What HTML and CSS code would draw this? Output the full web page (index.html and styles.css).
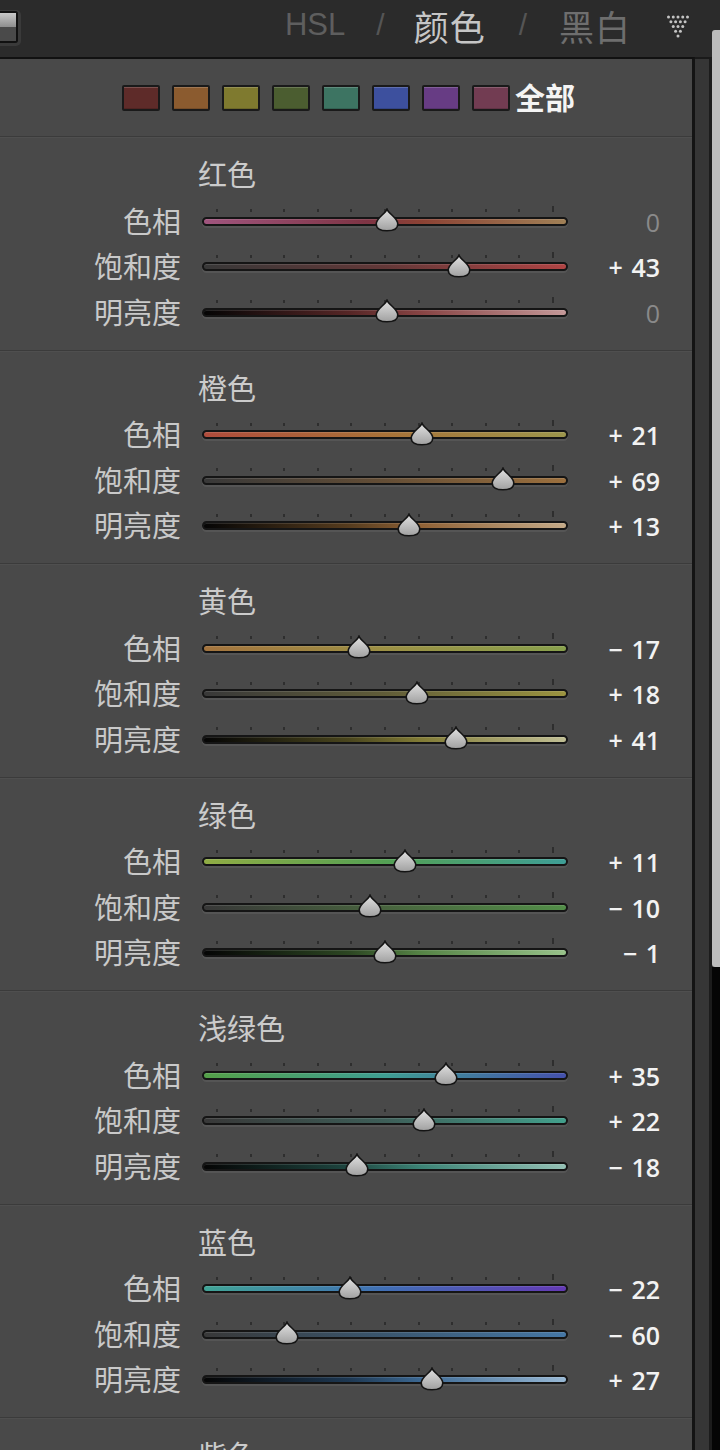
FILE: index.html
```html
<!DOCTYPE html>
<html lang="zh">
<head>
<meta charset="utf-8">
<title>HSL / 颜色 / 黑白</title>
<link rel="stylesheet" href="styles.css">
</head>
<body>
<div class="app">
  <div class="main">
    <header class="header">
      <div class="toggle"><span class="toggle-top"></span><span class="toggle-bottom"></span></div>
      <nav class="nav">
        <span class="tab tab-hsl">HSL</span>
        <span class="sep sep-1">/</span>
        <span class="tab tab-active">颜色</span>
        <span class="sep sep-2">/</span>
        <span class="tab tab-bw">黑白</span>
        <svg class="menu-icon" width="24" height="24" viewBox="0 0 24 24">
          <g fill="#c4c4c4">
            <circle cx="2.5" cy="3" r="1.5"/><circle cx="7.25" cy="3" r="1.5"/><circle cx="12" cy="3" r="1.5"/><circle cx="16.75" cy="3" r="1.5"/><circle cx="21.5" cy="3" r="1.5"/>
            <circle cx="4.9" cy="7.75" r="1.5"/><circle cx="9.6" cy="7.75" r="1.5"/><circle cx="14.4" cy="7.75" r="1.5"/><circle cx="19.1" cy="7.75" r="1.5"/>
            <circle cx="7.25" cy="12.5" r="1.5"/><circle cx="12" cy="12.5" r="1.5"/><circle cx="16.75" cy="12.5" r="1.5"/>
            <circle cx="9.6" cy="17.25" r="1.5"/><circle cx="14.4" cy="17.25" r="1.5"/>
            <circle cx="12" cy="22" r="1.5"/>
          </g>
        </svg>
      </nav>
    </header>
    <div class="body">
      <div class="panel">
        <div class="swatches">
          <span class="swatch sw-red"></span>
          <span class="swatch sw-orange"></span>
          <span class="swatch sw-yellow"></span>
          <span class="swatch sw-green"></span>
          <span class="swatch sw-aqua"></span>
          <span class="swatch sw-blue"></span>
          <span class="swatch sw-purple"></span>
          <span class="swatch sw-magenta"></span>
          <span class="all">全部</span>
        </div>

        <section class="group">
          <div class="title">红色</div>
          <div class="row"><span class="label">色相</span><div class="slider"><div class="ticks"><i></i><i></i><i></i><i></i><i></i><i></i><i></i><i></i><i></i><i></i><i></i></div><div class="track tr-red-h"></div><div class="thumb" style="--v:0"></div></div><span class="value zero">0</span></div>
          <div class="row"><span class="label">饱和度</span><div class="slider"><div class="ticks"><i></i><i></i><i></i><i></i><i></i><i></i><i></i><i></i><i></i><i></i><i></i></div><div class="track tr-red-s"></div><div class="thumb" style="--v:43"></div></div><span class="value">+ 43</span></div>
          <div class="row"><span class="label">明亮度</span><div class="slider"><div class="ticks"><i></i><i></i><i></i><i></i><i></i><i></i><i></i><i></i><i></i><i></i><i></i></div><div class="track tr-red-l"></div><div class="thumb" style="--v:0"></div></div><span class="value zero">0</span></div>
        </section>

        <section class="group">
          <div class="title">橙色</div>
          <div class="row"><span class="label">色相</span><div class="slider"><div class="ticks"><i></i><i></i><i></i><i></i><i></i><i></i><i></i><i></i><i></i><i></i><i></i></div><div class="track tr-orange-h"></div><div class="thumb" style="--v:21"></div></div><span class="value">+ 21</span></div>
          <div class="row"><span class="label">饱和度</span><div class="slider"><div class="ticks"><i></i><i></i><i></i><i></i><i></i><i></i><i></i><i></i><i></i><i></i><i></i></div><div class="track tr-orange-s"></div><div class="thumb" style="--v:69"></div></div><span class="value">+ 69</span></div>
          <div class="row"><span class="label">明亮度</span><div class="slider"><div class="ticks"><i></i><i></i><i></i><i></i><i></i><i></i><i></i><i></i><i></i><i></i><i></i></div><div class="track tr-orange-l"></div><div class="thumb" style="--v:13"></div></div><span class="value">+ 13</span></div>
        </section>

        <section class="group">
          <div class="title">黄色</div>
          <div class="row"><span class="label">色相</span><div class="slider"><div class="ticks"><i></i><i></i><i></i><i></i><i></i><i></i><i></i><i></i><i></i><i></i><i></i></div><div class="track tr-yellow-h"></div><div class="thumb" style="--v:-17"></div></div><span class="value">− 17</span></div>
          <div class="row"><span class="label">饱和度</span><div class="slider"><div class="ticks"><i></i><i></i><i></i><i></i><i></i><i></i><i></i><i></i><i></i><i></i><i></i></div><div class="track tr-yellow-s"></div><div class="thumb" style="--v:18"></div></div><span class="value">+ 18</span></div>
          <div class="row"><span class="label">明亮度</span><div class="slider"><div class="ticks"><i></i><i></i><i></i><i></i><i></i><i></i><i></i><i></i><i></i><i></i><i></i></div><div class="track tr-yellow-l"></div><div class="thumb" style="--v:41"></div></div><span class="value">+ 41</span></div>
        </section>

        <section class="group">
          <div class="title">绿色</div>
          <div class="row"><span class="label">色相</span><div class="slider"><div class="ticks"><i></i><i></i><i></i><i></i><i></i><i></i><i></i><i></i><i></i><i></i><i></i></div><div class="track tr-green-h"></div><div class="thumb" style="--v:11"></div></div><span class="value">+ 11</span></div>
          <div class="row"><span class="label">饱和度</span><div class="slider"><div class="ticks"><i></i><i></i><i></i><i></i><i></i><i></i><i></i><i></i><i></i><i></i><i></i></div><div class="track tr-green-s"></div><div class="thumb" style="--v:-10"></div></div><span class="value">− 10</span></div>
          <div class="row"><span class="label">明亮度</span><div class="slider"><div class="ticks"><i></i><i></i><i></i><i></i><i></i><i></i><i></i><i></i><i></i><i></i><i></i></div><div class="track tr-green-l"></div><div class="thumb" style="--v:-1"></div></div><span class="value">− 1</span></div>
        </section>

        <section class="group">
          <div class="title">浅绿色</div>
          <div class="row"><span class="label">色相</span><div class="slider"><div class="ticks"><i></i><i></i><i></i><i></i><i></i><i></i><i></i><i></i><i></i><i></i><i></i></div><div class="track tr-aqua-h"></div><div class="thumb" style="--v:35"></div></div><span class="value">+ 35</span></div>
          <div class="row"><span class="label">饱和度</span><div class="slider"><div class="ticks"><i></i><i></i><i></i><i></i><i></i><i></i><i></i><i></i><i></i><i></i><i></i></div><div class="track tr-aqua-s"></div><div class="thumb" style="--v:22"></div></div><span class="value">+ 22</span></div>
          <div class="row"><span class="label">明亮度</span><div class="slider"><div class="ticks"><i></i><i></i><i></i><i></i><i></i><i></i><i></i><i></i><i></i><i></i><i></i></div><div class="track tr-aqua-l"></div><div class="thumb" style="--v:-18"></div></div><span class="value">− 18</span></div>
        </section>

        <section class="group">
          <div class="title">蓝色</div>
          <div class="row"><span class="label">色相</span><div class="slider"><div class="ticks"><i></i><i></i><i></i><i></i><i></i><i></i><i></i><i></i><i></i><i></i><i></i></div><div class="track tr-blue-h"></div><div class="thumb" style="--v:-22"></div></div><span class="value">− 22</span></div>
          <div class="row"><span class="label">饱和度</span><div class="slider"><div class="ticks"><i></i><i></i><i></i><i></i><i></i><i></i><i></i><i></i><i></i><i></i><i></i></div><div class="track tr-blue-s"></div><div class="thumb" style="--v:-60"></div></div><span class="value">− 60</span></div>
          <div class="row"><span class="label">明亮度</span><div class="slider"><div class="ticks"><i></i><i></i><i></i><i></i><i></i><i></i><i></i><i></i><i></i><i></i><i></i></div><div class="track tr-blue-l"></div><div class="thumb" style="--v:27"></div></div><span class="value">+ 27</span></div>
        </section>

        <section class="group">
          <div class="title">紫色</div>
        </section>
      </div>
      <div class="gutter"></div>
    </div>
  </div>
  <div class="scrollcol">
    <div class="scroll-top"></div>
    <div class="scroll-thumb"></div>
    <div class="scroll-rest"></div>
  </div>
</div>
</body>
</html>
```

FILE: styles.css
```css
html, body {
  margin: 0;
  padding: 0;
}
body {
  width: 720px;
  height: 1450px;
  overflow: hidden;
  background: #2b2b2b;
  font-family: "Noto Sans CJK SC", "Noto Sans", sans-serif;
  color: #c8c8c8;
}
.app {
  display: flex;
  height: 1450px;
}
.main {
  width: 712px;
  display: flex;
  flex-direction: column;
}
.header {
  height: 57px;
  flex: none;
  background: #2b2b2b;
  display: flex;
  align-items: center;
}
.toggle {
  width: 16px;
  height: 28px;
  margin-top: -4px;
  border: 2px solid #111;
  border-left-width: 0;
  border-radius: 0 3px 3px 0;
  display: flex;
  flex-direction: column;
  box-shadow: 1px 1px 0 2px #3a3a3a;
}
.toggle-top {
  flex: 1;
  background: linear-gradient(#c8c8c8, #8e8e8e);
}
.toggle-bottom {
  flex: 1;
  background: #4a4a4a;
}
.nav {
  margin-left: auto;
  margin-right: 22px;
  margin-top: -5px;
  display: flex;
  align-items: center;
}
.tab {
  font-size: 35px;
  line-height: 40px;
  letter-spacing: 1px;
}
.tab-hsl {
  font-family: "Liberation Sans", sans-serif;
  font-size: 31px;
  letter-spacing: 0;
  color: #5e5e5e;
  margin-left: -4px;
  margin-top: -3px;
}
.tab-active {
  color: #c6c6c6;
}
.tab-bw {
  color: #6e6e6e;
  margin-left: 2px;
  margin-right: 2px;
}
.sep {
  font-family: "Liberation Sans", sans-serif;
  font-size: 30px;
  line-height: 40px;
  color: #555;
  margin-top: -3px;
}
.sep-1 {
  margin-left: 31px;
  margin-right: 29px;
}
.sep-2 {
  margin-left: 33px;
  margin-right: 30px;
}
.menu-icon {
  display: block;
  margin-left: 33px;
  margin-top: 0;
}
.body {
  flex: 1;
  min-height: 0;
  display: flex;
}
.panel {
  width: 692px;
  flex: none;
  background: #494949;
  border-top: 2px solid #111;
  border-right: 3px solid #141414;
  overflow: hidden;
}
.gutter {
  flex: 1;
  background: #363636;
  border-top: 2px solid #1a1a1a;
  border-right: 3px solid #1c1c1c;
}
.scrollcol {
  width: 8px;
  display: flex;
  flex-direction: column;
}
.scroll-top {
  height: 30px;
  background: #2b2b2b;
}
.scroll-thumb {
  height: 937px;
  background: #bcbcbc;
  border-radius: 3px 0 0 3px;
}
.scroll-rest {
  flex: 1;
  background: #050505;
}
.swatches {
  height: 77px;
  display: flex;
  align-items: center;
  padding-left: 122px;
  gap: 12px;
}
.swatch {
  width: 34px;
  height: 22px;
  border: 2px solid #1a1a1a;
  border-radius: 2px;
  box-shadow: inset 0 1px 0 rgba(255,255,255,0.18), inset 0 -1px 0 rgba(0,0,0,0.15);
}
.sw-red { background: #5e2b29; }
.sw-orange { background: #8b5b2f; }
.sw-yellow { background: #7f7a2f; }
.sw-green { background: #4b5d30; }
.sw-aqua { background: #3d7462; }
.sw-blue { background: #3d509e; }
.sw-purple { background: #673c84; }
.sw-magenta { background: #723c52; }
.all {
  margin-left: -7px;
  margin-top: -4px;
  font-size: 30px;
  font-weight: 700;
  color: #f4f4f4;
  line-height: 30px;
}
.group {
  height: 213.5px;
  box-sizing: border-box;
  border-top: 1px solid #3b3b3b;
  box-shadow: inset 0 1px 0 #4f4f4f;
  padding-top: 19px;
}
.title {
  padding-left: 198px;
  font-size: 29px;
  line-height: 34px;
  color: #cbcbcb;
  margin-bottom: 8px;
}
.row {
  height: 45.5px;
  display: grid;
  grid-template-columns: 181px 366px 71px;
  column-gap: 21px;
  align-items: center;
}
.label {
  text-align: right;
  font-size: 29px;
  line-height: 34px;
  color: #c9c9c9;
  margin-top: -2px;
}
.slider {
  position: relative;
  height: 45.5px;
  display: flex;
  flex-direction: column;
  justify-content: center;
}
.ticks {
  position: absolute;
  left: 14px;
  right: 14px;
  top: 11px;
  display: flex;
  justify-content: space-between;
}
.ticks i {
  display: block;
  width: 2px;
  height: 3px;
  background: #2e2e2e;
}
.ticks i:last-child {
  height: 6px;
  margin-top: -3px;
}
.track {
  height: 5px;
  margin-top: 1px;
  border: 2.5px solid #151515;
  border-radius: 6px;
  box-shadow: 0 2px 0 rgba(255,255,255,0.07), inset 0 1px 0 rgba(255,255,255,0.12);
}
.thumb {
  position: absolute;
  top: 10px;
  left: calc(173px + var(--v) * 1.675px);
  width: 24px;
  height: 24px;
  background: url("data:image/svg+xml;utf8,<svg xmlns='http://www.w3.org/2000/svg' width='24' height='24' viewBox='0 0 24 24'><defs><linearGradient id='g' x1='0' y1='0' x2='0' y2='1'><stop offset='0' stop-color='%23e2e2e2'/><stop offset='1' stop-color='%23a0a0a0'/></linearGradient></defs><path d='M12 1.2 C13.8 6 22.8 10 22.8 16 C22.8 20.8 18 22.8 12 22.8 C6 22.8 1.2 20.8 1.2 16 C1.2 10 10.2 6 12 1.2 Z' fill='url(%23g)' stroke='%23141414' stroke-width='1.6'/></svg>") no-repeat;
}
.value {
  text-align: right;
  font-family: "Open Sans", "Liberation Sans", sans-serif;
  font-size: 25px;
  font-weight: 600;
  color: #f2f2f2;
  line-height: 30px;
  margin-top: 2px;
  word-spacing: 2px;
}
.value.zero {
  color: #8a8a8a;
  font-weight: 400;
}

/* track gradients */
.tr-red-h { background: linear-gradient(90deg, #a0557e, #7e3444 45%, #8c4234 60%, #a08056); }
.tr-red-s { background: linear-gradient(90deg, #383838, #633838 50%, #b04444); }
.tr-red-l { background: linear-gradient(90deg, #050505, #562626 40%, #884444 60%, #c49898); }
.tr-orange-h { background: linear-gradient(90deg, #b04c3c, #a87238 50%, #9c964c); }
.tr-orange-s { background: linear-gradient(90deg, #383838, #644e36 50%, #9c703e); }
.tr-orange-l { background: linear-gradient(90deg, #050505, #563c1e 40%, #906236 60%, #c4aa88); }
.tr-yellow-h { background: linear-gradient(90deg, #a4743e, #9c9044 50%, #88a04c); }
.tr-yellow-s { background: linear-gradient(90deg, #383838, #605c38 50%, #9c9440); }
.tr-yellow-l { background: linear-gradient(90deg, #050505, #4a461e 40%, #827c36 60%, #c0be94); }
.tr-green-h { background: linear-gradient(90deg, #90ac44, #54a054 50%, #3e9e96); }
.tr-green-s { background: linear-gradient(90deg, #383838, #48643e 50%, #528e48); }
.tr-green-l { background: linear-gradient(90deg, #050505, #2c4622 40%, #568446 60%, #98c28a); }
.tr-aqua-h { background: linear-gradient(90deg, #54a048, #3e9e92 50%, #4450ac); }
.tr-aqua-s { background: linear-gradient(90deg, #383838, #3e5e58 50%, #42a08c); }
.tr-aqua-l { background: linear-gradient(90deg, #050505, #1e4640 40%, #3c8476 60%, #94c0b4); }
.tr-blue-h { background: linear-gradient(90deg, #40a496, #406eb4 50%, #643ab4); }
.tr-blue-s { background: linear-gradient(90deg, #383838, #3a566e 50%, #4678a6); }
.tr-blue-l { background: linear-gradient(90deg, #050505, #1e3852 40%, #3c6892 60%, #98b8d4); }
```
